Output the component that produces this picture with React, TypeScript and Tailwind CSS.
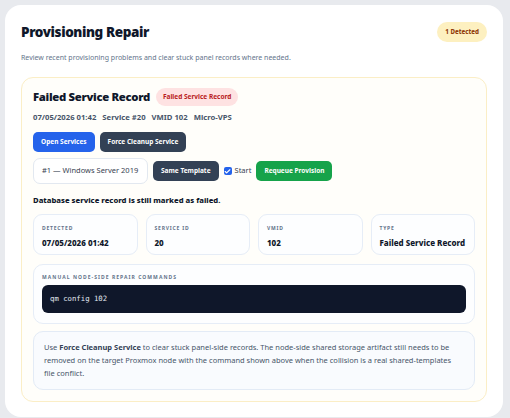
import { Check } from 'lucide-react';

const stats = [
  { label: 'Detected', value: '07/05/2026 01:42' },
  { label: 'Service ID', value: '20' },
  { label: 'VMID', value: '102' },
  { label: 'Type', value: 'Failed Service Record' },
];

const App = () => {
  return (
    <div className="min-h-screen bg-[#e8eaee] pt-[5px] pr-[7px] pb-[5px] pl-[5px] font-['Noto_Sans',sans-serif]">
      <div className="rounded-[16px] bg-white px-[16px] pt-[15px] pb-[15px]">
        {/* Header */}
        <div className="flex h-[24px] items-center justify-between">
          <h1 className="text-[13.5px] leading-[24px] font-black tracking-[-0.4px] text-[#0f172a]">Provisioning Repair</h1>
          <span className="rounded-full bg-[#fdf0c0] px-[8px] py-[5px] text-[6.2px] leading-[10px] font-extrabold text-[#92400e]">
            1 Detected
          </span>
        </div>
        <p className="mt-[8px] text-[7px] leading-[12px] text-[#64748b]">
          Review recent provisioning problems and clear stuck panel records where needed.
        </p>

        {/* Record card */}
        <div className="mt-[13px] rounded-[12px] border border-[#fbeec6] bg-[#fffefa] px-[11px] pt-[10px] pb-[11px]">
          <div className="flex h-[18px] items-center gap-[6px]">
            <h2 className="text-[11.3px] leading-[18px] font-black tracking-[-0.3px] text-[#0f172a]">Failed Service Record</h2>
            <span className="rounded-full bg-[#fee2e2] px-[7px] py-[4px] text-[6.5px] leading-[10px] font-bold text-[#b91c1c]">
              Failed Service Record
            </span>
          </div>
          <div className="mt-[5px] flex gap-[6px] text-[7.7px] leading-[12px] font-bold text-[#475569]">
            <span>07/05/2026 01:42</span>
            <span>Service #20</span>
            <span>VMID 102</span>
            <span>Micro-VPS</span>
          </div>

          <div className="mt-[9px] flex gap-[5px]">
            <button className="h-[20px] rounded-[5px] bg-[#2563eb] px-[8px] text-[6.5px] font-bold text-white">Open Services</button>
            <button className="h-[20px] rounded-[5px] bg-[#334155] px-[8px] text-[6.5px] font-bold text-white">Force Cleanup Service</button>
          </div>

          <div className="mt-[6px] flex items-center gap-[5px]">
            <div className="flex h-[26px] w-[115px] items-center rounded-[7px] border border-[#e2e8f0] bg-white px-[8px] text-[7.5px] text-[#374151]">
              #1 — Windows Server 2019
            </div>
            <button className="h-[20px] rounded-[5px] bg-[#334155] px-[8px] text-[6.5px] font-bold text-white">Same Template</button>
            <label className="flex items-center gap-[3px] text-[7.5px] text-[#374151]">
              <span className="flex h-[8px] w-[8px] items-center justify-center rounded-[2px] bg-[#2563eb]">
                <Check className="h-[7px] w-[7px] text-white" strokeWidth={4} />
              </span>
              Start
            </label>
            <button className="h-[20px] rounded-[5px] bg-[#16a34a] px-[8px] text-[6.5px] font-bold text-white">Requeue Provision</button>
          </div>

          <p className="mt-[10px] text-[7.7px] leading-[12px] font-extrabold text-[#0f172a]">
            Database service record is still marked as failed.
          </p>

          {/* Stats */}
          <div className="mt-[8px] grid grid-cols-4 gap-[8px]">
            {stats.map((s) => (
              <div key={s.label} className="h-[41px] rounded-[9px] border border-[#e6edf7] bg-[#fdfeff] px-[8px] pt-[9px]">
                <div className="text-[5px] leading-[8px] font-bold tracking-[0.8px] text-[#64748b] uppercase">{s.label}</div>
                <div className="mt-[5px] text-[8px] leading-[12px] font-extrabold text-[#0f172a]">{s.value}</div>
              </div>
            ))}
          </div>

          {/* Commands */}
          <div className="mt-[9px] rounded-[10px] border border-[#e6edf7] bg-[#fdfeff] px-[8px] pt-[8px] pb-[10px]">
            <div className="text-[5px] leading-[8px] font-bold tracking-[1.05px] text-[#64748b] uppercase">
              Manual node-side repair commands
            </div>
            <div className="mt-[4px] flex h-[28px] items-center rounded-[6px] bg-[#0f172a] px-[8px] font-['DejaVu_Sans_Mono',monospace] text-[7.3px] text-[#e2e8f0]">
              qm config 102
            </div>
          </div>

          {/* Note */}
          <div className="mt-[7px] rounded-[10px] border border-[#e3ebf6] bg-[#f9fbfe] px-[10px] py-[9px] text-[7.5px] leading-[13px] text-[#475569]">
            Use <b className="font-bold text-[#334155]">Force Cleanup Service</b> to clear stuck panel-side records. The node-side shared storage artifact still needs to be removed on the target Proxmox node with the command shown above when the collision is a real shared-templates{' '}
            <span className="whitespace-nowrap">file conflict.</span>
          </div>
        </div>
      </div>
    </div>
  );
};

export default App;
